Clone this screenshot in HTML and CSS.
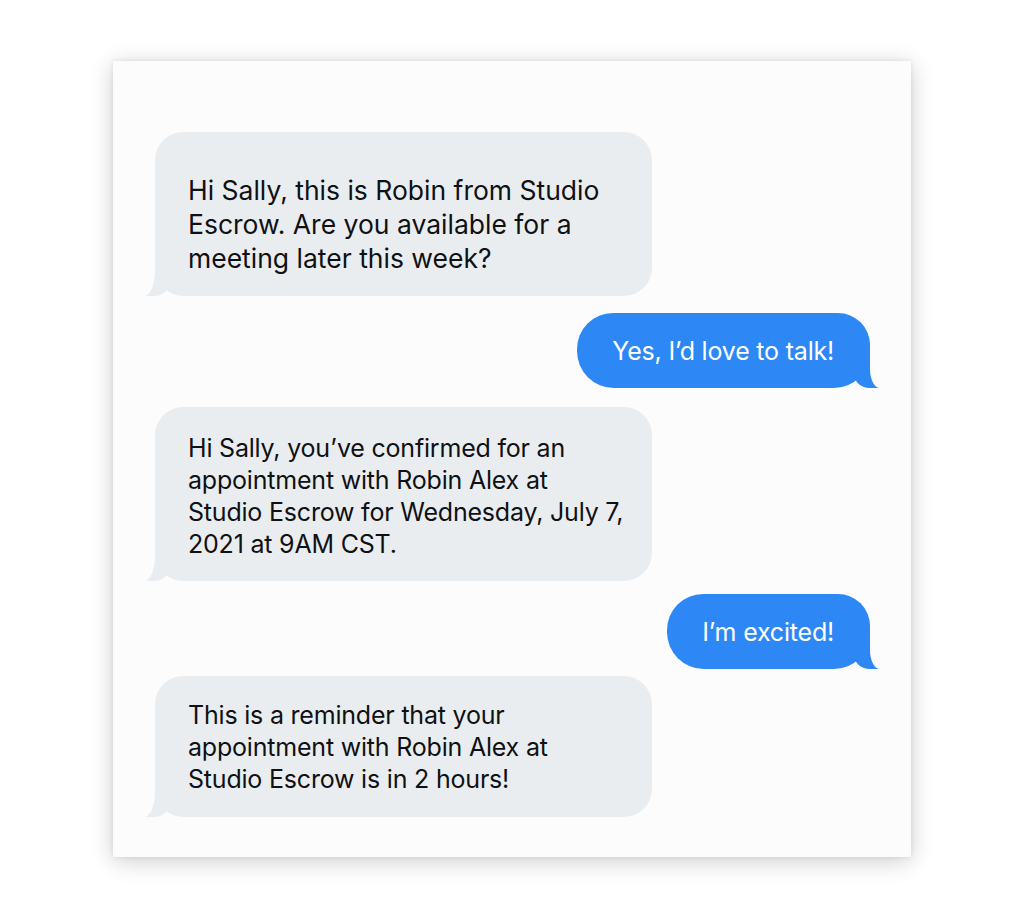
FILE: index.html
```html
<!DOCTYPE html>
<html lang="en">
<head>
<meta charset="utf-8">
<title>Messages</title>
<link rel="stylesheet" href="styles.css">
</head>
<body>
  <main class="card">
    <div class="thread">
      <p class="bubble in first">Hi Sally, this is Robin from Studio<br>Escrow. Are you available for a<br>meeting later this week?</p>
      <p class="bubble out gap-a">Yes, I’d love to talk!</p>
      <p class="bubble in gap-b confirm">Hi Sally, you’ve confirmed for an<br>appointment with Robin Alex at<br>Studio Escrow for Wednesday, July 7,<br>2021 at 9AM CST.</p>
      <p class="bubble out gap-c">I’m excited!</p>
      <p class="bubble in gap-d reminder">This is a reminder that your<br>appointment with Robin Alex at<br>Studio Escrow is in 2 hours!</p>
    </div>
  </main>
</body>
</html>
```
FILE: styles.css
```css
html, body {
  margin: 0;
  padding: 0;
  background: #ffffff;
}

body {
  font-family: Inter, "Noto Sans", "Liberation Sans", sans-serif;
  padding: 61px 0 62px;
}

.card {
  width: 798px;
  margin: 0 auto;
  background: #fcfcfd;
  box-shadow: 0 4px 22px rgba(0, 0, 0, 0.2), 0 0 5px rgba(0, 0, 0, 0.08);
  box-sizing: border-box;
  padding: 71px 41px 40px 42px;
}

.thread {
  display: flex;
  flex-direction: column;
}

.bubble {
  position: relative;
  margin: 0;
  font-size: 25px;
  line-height: 32px;
  letter-spacing: -0.2px;
}

.bubble.in {
  align-self: flex-start;
  width: 497px;
  box-sizing: border-box;
  background: #eaedf0;
  color: #0f1113;
  border-radius: 28px;
  padding: 23px 20px 22px 33px;
}

.bubble.in.first {
  font-size: 26.5px;
  letter-spacing: 0;
  line-height: 34px;
  padding-top: 41px;
  padding-bottom: 21px;
}

.bubble.in.confirm {
  padding-top: 25px;
  padding-bottom: 21px;
}

.bubble.out {
  align-self: flex-end;
  background: #2d87f5;
  color: #ffffff;
  border-radius: 36px 32px 36px 37px;
  padding: 22px 36px 21px 35px;
}

.bubble.in::before,
.bubble.in::after,
.bubble.out::before,
.bubble.out::after {
  content: "";
  position: absolute;
  bottom: 0;
}

/* incoming tail (bottom-left) */
.bubble.in::before {
  left: -11px;
  width: 25px;
  height: 28px;
  background: #eaedf0;
  border-bottom-right-radius: 14px 14px;
}

.bubble.in::after {
  left: -30px;
  width: 30px;
  height: 28px;
  background: #fcfcfd;
  border-bottom-right-radius: 11px 25px;
}

/* outgoing tail (bottom-right) */
.bubble.out::before {
  right: -10px;
  width: 26px;
  height: 36px;
  background: #2d87f5;
  border-bottom-left-radius: 16px 14px;
}

.bubble.out::after {
  right: -30px;
  width: 30px;
  height: 36px;
  background: #fcfcfd;
  border-bottom-left-radius: 10px 19px;
}

.gap-a { margin-top: 17px; }
.gap-b { margin-top: 19px; }
.gap-c { margin-top: 13px; }
.gap-d { margin-top: 7px; }
```
